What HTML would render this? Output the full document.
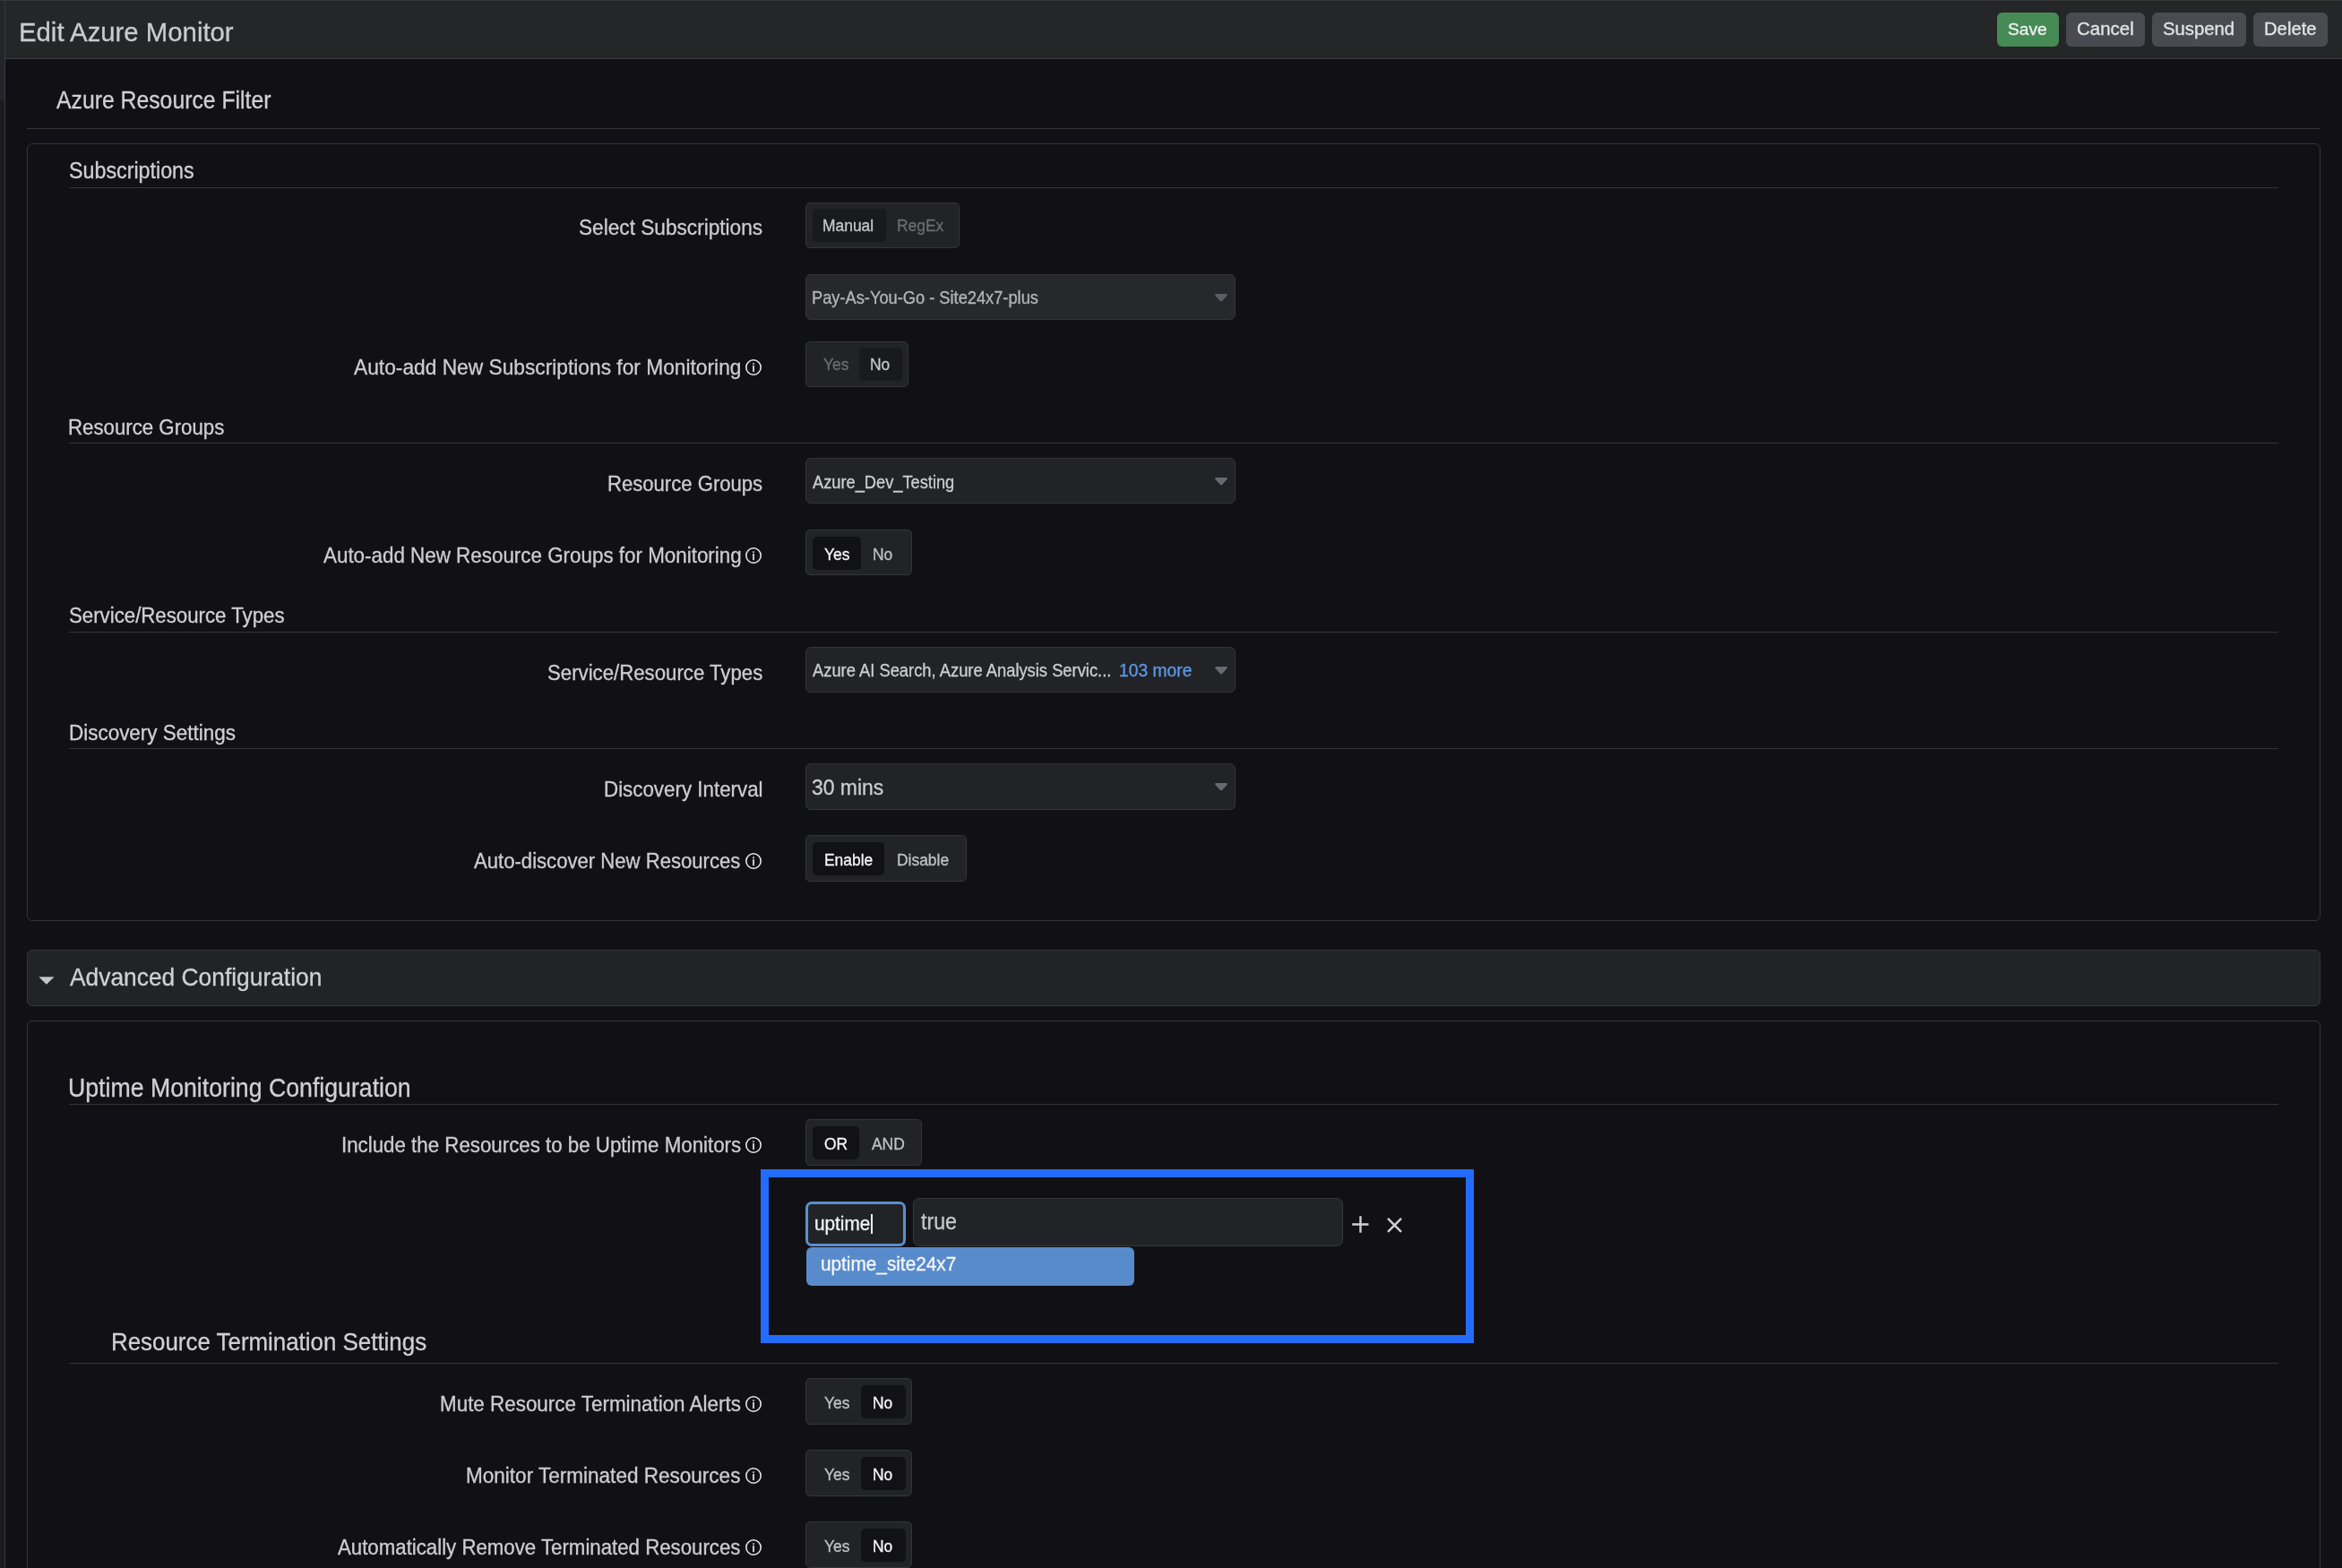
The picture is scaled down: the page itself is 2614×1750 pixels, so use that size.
<!DOCTYPE html>
<html><head><meta charset="utf-8"><title>Edit Azure Monitor</title>
<style>
html,body{margin:0;padding:0;}
body{width:2614px;height:1750px;background:#111115;position:relative;overflow:hidden;font-family:"Liberation Sans", sans-serif;}
.t{position:absolute;white-space:nowrap;line-height:1;will-change:transform;-webkit-text-stroke:0.3px currentColor;}
</style></head><body>
<div style="position:absolute;left:0px;top:0px;width:5.00px;height:111.00px;box-sizing:border-box;background:#23252a;"></div>
<div style="position:absolute;left:0px;top:111px;width:5.00px;height:1639.00px;box-sizing:border-box;background:#1a1c20;"></div>
<div style="position:absolute;left:5px;top:0px;width:1.00px;height:1750.00px;box-sizing:border-box;background:#363738;"></div>
<div style="position:absolute;left:6px;top:0px;width:2608.00px;height:66.00px;box-sizing:border-box;background:#252628;border-bottom:1px solid #3a3b3e;"></div>
<div style="position:absolute;left:0px;top:0px;width:2614.00px;height:1.00px;box-sizing:border-box;background:#373737;"></div>
<div class="t" style="left:21.35px;top:21.00px;font-size:29.33px;color:#cbcbcd;transform-origin:0 24.93px;transform:scaleY(1.03);">Edit Azure Monitor</div>
<div style="position:absolute;left:2229px;top:14px;width:69px;height:38px;background:#468a55;border-radius:6px;"></div>
<div class="t" style="left:2241.44px;top:23.00px;font-size:19.22px;color:#f2f2f2;transform-origin:0 16.34px;transform:scaleY(1.0);">Save</div>
<div style="position:absolute;left:2306px;top:14px;width:88px;height:38px;background:#4a4b50;border-radius:6px;"></div>
<div class="t" style="left:2317.78px;top:22.00px;font-size:20.50px;color:#e4e4e6;transform-origin:0 17.43px;transform:scaleY(1.0);">Cancel</div>
<div style="position:absolute;left:2402px;top:14px;width:105px;height:38px;background:#4a4b50;border-radius:6px;"></div>
<div class="t" style="left:2414.28px;top:22.00px;font-size:20.31px;color:#e4e4e6;transform-origin:0 17.26px;transform:scaleY(1.0);">Suspend</div>
<div style="position:absolute;left:2515px;top:14px;width:83px;height:38px;background:#4a4b50;border-radius:6px;"></div>
<div class="t" style="left:2526.78px;top:22.00px;font-size:20.25px;color:#e4e4e6;transform-origin:0 17.21px;transform:scaleY(1.0);">Delete</div>
<div class="t" style="left:63.20px;top:101.00px;font-size:24.78px;color:#d0d0d2;transform-origin:0 21.06px;transform:scaleY(1.08);">Azure Resource Filter</div>
<div style="position:absolute;left:30px;top:143px;width:2560.00px;height:1.00px;box-sizing:border-box;background:#353536;"></div>
<div style="position:absolute;left:30px;top:160px;width:2560.00px;height:868.00px;box-sizing:border-box;border:1px solid #353536;border-radius:6px;"></div>
<div class="t" style="left:76.54px;top:180.00px;font-size:23.28px;color:#d0d0d2;transform-origin:0 19.79px;transform:scaleY(1.08);">Subscriptions</div>
<div style="position:absolute;left:77px;top:209px;width:2466.00px;height:1.00px;box-sizing:border-box;background:#353536;"></div>
<div class="t" style="left:646.27px;top:243.00px;font-size:22.65px;color:#cdcdd0;transform-origin:0 19.25px;transform:scaleY(1.08);">Select Subscriptions</div>
<div style="position:absolute;left:899px;top:226px;width:172.00px;height:51.00px;box-sizing:border-box;background:#222327;border:1px solid #353536;border-radius:5px;"></div>
<div style="position:absolute;left:907px;top:233px;width:82.00px;height:37.00px;box-sizing:border-box;background:#191a1e;border-radius:5px;"></div>
<div class="t" style="left:918.41px;top:244.00px;font-size:17.43px;color:#c6c6c9;transform-origin:0 14.82px;transform:scaleY(1.08);">Manual</div>
<div class="t" style="left:1001.31px;top:244.00px;font-size:17.43px;color:#6c6c70;transform-origin:0 14.82px;transform:scaleY(1.08);">RegEx</div>
<div style="position:absolute;left:899px;top:306px;width:480.00px;height:51.00px;box-sizing:border-box;background:#27282c;border:1px solid #353536;border-radius:6px;"></div>
<svg style="position:absolute;left:1355.5px;top:327.70px" width="14" height="9" viewBox="0 0 14 9"><path d="M0.3 0.6 Q0.3 0 1 0 L13 0 Q13.7 0 13.7 0.6 L13.7 1.8 L8 7.9 Q7 8.8 6 7.9 L0.3 1.8 Z" fill="#5c5e64"/></svg>
<div class="t" style="left:905.94px;top:324.00px;font-size:18.26px;color:#b4b4b8;transform-origin:0 15.52px;transform:scaleY(1.08);">Pay-As-You-Go - Site24x7-plus</div>
<div class="t" style="left:394.80px;top:399.00px;font-size:22.75px;color:#cdcdd0;transform-origin:0 19.34px;transform:scaleY(1.08);">Auto-add New Subscriptions for Monitoring</div>
<svg style="position:absolute;left:831.00px;top:400.10px" width="20" height="20" viewBox="0 0 20 20"><circle cx="10" cy="10" r="8.2" fill="none" stroke="#e6e6e8" stroke-width="1.6"/><rect x="9.15" y="5.3" width="1.7" height="1.6" fill="#e6e6e8"/><rect x="9.15" y="7.9" width="1.7" height="7.2" fill="#e6e6e8"/></svg>
<div style="position:absolute;left:899px;top:381px;width:115.00px;height:51.00px;box-sizing:border-box;background:#222327;border:1px solid #353536;border-radius:5px;"></div>
<div style="position:absolute;left:959px;top:388px;width:48.00px;height:37.00px;box-sizing:border-box;background:#191a1e;border-radius:5px;"></div>
<div class="t" style="left:919.45px;top:399.00px;font-size:17.43px;color:#6c6c70;transform-origin:0 14.82px;transform:scaleY(1.08);">Yes</div>
<div class="t" style="left:971.41px;top:399.00px;font-size:17.43px;color:#c6c6c9;transform-origin:0 14.82px;transform:scaleY(1.08);">No</div>
<div class="t" style="left:76.42px;top:467.00px;font-size:22.24px;color:#d0d0d2;transform-origin:0 18.90px;transform:scaleY(1.08);">Resource Groups</div>
<div style="position:absolute;left:77px;top:494px;width:2466.00px;height:1.00px;box-sizing:border-box;background:#353536;"></div>
<div class="t" style="left:678.13px;top:530.00px;font-size:22.10px;color:#cdcdd0;transform-origin:0 18.79px;transform:scaleY(1.08);">Resource Groups</div>
<div style="position:absolute;left:899px;top:511px;width:480.00px;height:51.00px;box-sizing:border-box;background:#222327;border:1px solid #353536;border-radius:6px;"></div>
<svg style="position:absolute;left:1355.5px;top:532.70px" width="14" height="9" viewBox="0 0 14 9"><path d="M0.3 0.6 Q0.3 0 1 0 L13 0 Q13.7 0 13.7 0.6 L13.7 1.8 L8 7.9 Q7 8.8 6 7.9 L0.3 1.8 Z" fill="#686a72"/></svg>
<div class="t" style="left:907.20px;top:530.00px;font-size:18.25px;color:#cdcdd0;transform-origin:0 15.51px;transform:scaleY(1.08);">Azure_Dev_Testing</div>
<div class="t" style="left:360.50px;top:610.00px;font-size:22.40px;color:#cdcdd0;transform-origin:0 19.04px;transform:scaleY(1.08);">Auto-add New Resource Groups for Monitoring</div>
<svg style="position:absolute;left:831.00px;top:610.00px" width="20" height="20" viewBox="0 0 20 20"><circle cx="10" cy="10" r="8.2" fill="none" stroke="#e6e6e8" stroke-width="1.6"/><rect x="9.15" y="5.3" width="1.7" height="1.6" fill="#e6e6e8"/><rect x="9.15" y="7.9" width="1.7" height="7.2" fill="#e6e6e8"/></svg>
<div style="position:absolute;left:899px;top:591px;width:119.00px;height:51.00px;box-sizing:border-box;background:#222327;border:1px solid #353536;border-radius:5px;"></div>
<div style="position:absolute;left:907px;top:599px;width:54.00px;height:37.00px;box-sizing:border-box;background:#111116;border-radius:5px;"></div>
<div class="t" style="left:920.25px;top:611.00px;font-size:17.43px;color:#f4f4f4;transform-origin:0 14.82px;transform:scaleY(1.08);">Yes</div>
<div class="t" style="left:974.01px;top:611.00px;font-size:17.43px;color:#c0c0c3;transform-origin:0 14.82px;transform:scaleY(1.08);">No</div>
<div class="t" style="left:76.79px;top:677.00px;font-size:22.24px;color:#d0d0d2;transform-origin:0 18.90px;transform:scaleY(1.08);">Service/Resource Types</div>
<div style="position:absolute;left:77px;top:705px;width:2466.00px;height:1.00px;box-sizing:border-box;background:#353536;"></div>
<div class="t" style="left:610.89px;top:741.00px;font-size:22.21px;color:#cdcdd0;transform-origin:0 18.88px;transform:scaleY(1.08);">Service/Resource Types</div>
<div style="position:absolute;left:899px;top:722px;width:480.00px;height:51.00px;box-sizing:border-box;background:#222327;border:1px solid #353536;border-radius:6px;"></div>
<svg style="position:absolute;left:1355.5px;top:743.70px" width="14" height="9" viewBox="0 0 14 9"><path d="M0.3 0.6 Q0.3 0 1 0 L13 0 Q13.7 0 13.7 0.6 L13.7 1.8 L8 7.9 Q7 8.8 6 7.9 L0.3 1.8 Z" fill="#686a72"/></svg>
<div class="t" style="left:907.00px;top:740.00px;font-size:18.35px;color:#cdcdd0;transform-origin:0 15.60px;transform:scaleY(1.08);">Azure AI Search, Azure Analysis Servic...</div>
<div class="t" style="left:1248.95px;top:739.00px;font-size:19.29px;color:#5a99e4;transform-origin:0 16.40px;transform:scaleY(1.08);">103 more</div>
<div class="t" style="left:76.80px;top:808.00px;font-size:22.46px;color:#d0d0d2;transform-origin:0 19.09px;transform:scaleY(1.08);">Discovery Settings</div>
<div style="position:absolute;left:77px;top:835px;width:2466.00px;height:1.00px;box-sizing:border-box;background:#353536;"></div>
<div class="t" style="left:674.11px;top:871.00px;font-size:22.35px;color:#cdcdd0;transform-origin:0 19.00px;transform:scaleY(1.08);">Discovery Interval</div>
<div style="position:absolute;left:899px;top:852px;width:480.00px;height:52.00px;box-sizing:border-box;background:#222327;border:1px solid #353536;border-radius:6px;"></div>
<svg style="position:absolute;left:1355.5px;top:874.20px" width="14" height="9" viewBox="0 0 14 9"><path d="M0.3 0.6 Q0.3 0 1 0 L13 0 Q13.7 0 13.7 0.6 L13.7 1.8 L8 7.9 Q7 8.8 6 7.9 L0.3 1.8 Z" fill="#686a72"/></svg>
<div class="t" style="left:906.48px;top:868.00px;font-size:22.92px;color:#cdcdd0;transform-origin:0 19.48px;transform:scaleY(1.08);">30 mins</div>
<div class="t" style="left:529.30px;top:951.00px;font-size:22.11px;color:#cdcdd0;transform-origin:0 18.79px;transform:scaleY(1.08);">Auto-discover New Resources</div>
<svg style="position:absolute;left:831.00px;top:950.60px" width="20" height="20" viewBox="0 0 20 20"><circle cx="10" cy="10" r="8.2" fill="none" stroke="#e6e6e8" stroke-width="1.6"/><rect x="9.15" y="5.3" width="1.7" height="1.6" fill="#e6e6e8"/><rect x="9.15" y="7.9" width="1.7" height="7.2" fill="#e6e6e8"/></svg>
<div style="position:absolute;left:899px;top:932px;width:180.00px;height:52.00px;box-sizing:border-box;background:#222327;border:1px solid #353536;border-radius:5px;"></div>
<div style="position:absolute;left:907px;top:940px;width:80.00px;height:37.00px;box-sizing:border-box;background:#111116;border-radius:5px;"></div>
<div class="t" style="left:919.81px;top:952.00px;font-size:17.43px;color:#f4f4f4;transform-origin:0 14.82px;transform:scaleY(1.08);">Enable</div>
<div class="t" style="left:1000.51px;top:952.00px;font-size:17.43px;color:#c0c0c3;transform-origin:0 14.82px;transform:scaleY(1.08);">Disable</div>
<div style="position:absolute;left:30px;top:1060px;width:2560.00px;height:63.00px;box-sizing:border-box;background:#222327;border:1px solid #353536;border-radius:6px;"></div>
<svg style="position:absolute;left:43px;top:1089.8px" width="18" height="10" viewBox="0 0 18 10"><path d="M0.3 0.3 L17.5 0.3 L8.9 8.8 Z" fill="#c6c6c8"/></svg>
<div class="t" style="left:77.90px;top:1078.00px;font-size:26.36px;color:#d0d0d2;transform-origin:0 22.41px;transform:scaleY(1.08);">Advanced Configuration</div>
<div style="position:absolute;left:30px;top:1139px;width:2560.00px;height:631.00px;box-sizing:border-box;border:1px solid #353536;border-radius:6px;"></div>
<div class="t" style="left:75.76px;top:1202.00px;font-size:26.69px;color:#d0d0d2;transform-origin:0 22.69px;transform:scaleY(1.08);">Uptime Monitoring Configuration</div>
<div style="position:absolute;left:77px;top:1232px;width:2466.00px;height:1.00px;box-sizing:border-box;background:#353536;"></div>
<div class="t" style="left:380.59px;top:1268.00px;font-size:22.30px;color:#cdcdd0;transform-origin:0 18.96px;transform:scaleY(1.08);">Include the Resources to be Uptime Monitors</div>
<svg style="position:absolute;left:831.00px;top:1267.70px" width="20" height="20" viewBox="0 0 20 20"><circle cx="10" cy="10" r="8.2" fill="none" stroke="#e6e6e8" stroke-width="1.6"/><rect x="9.15" y="5.3" width="1.7" height="1.6" fill="#e6e6e8"/><rect x="9.15" y="7.9" width="1.7" height="7.2" fill="#e6e6e8"/></svg>
<div style="position:absolute;left:899px;top:1249px;width:130.00px;height:52.00px;box-sizing:border-box;background:#222327;border:1px solid #353536;border-radius:5px;"></div>
<div style="position:absolute;left:907px;top:1257px;width:52.00px;height:37.00px;box-sizing:border-box;background:#111116;border-radius:5px;"></div>
<div class="t" style="left:919.83px;top:1269.00px;font-size:17.43px;color:#f4f4f4;transform-origin:0 14.82px;transform:scaleY(1.08);">OR</div>
<div class="t" style="left:972.80px;top:1269.00px;font-size:17.43px;color:#c0c0c3;transform-origin:0 14.82px;transform:scaleY(1.08);">AND</div>
<div style="position:absolute;left:849px;top:1305px;width:796.00px;height:194.00px;box-sizing:border-box;border:9px solid #236cfb;"></div>
<div style="position:absolute;left:899px;top:1341px;width:112.00px;height:50.00px;box-sizing:border-box;background:#222327;border:3px solid #5a8fd0;border-radius:7px;"></div>
<div class="t" style="left:908.55px;top:1356.00px;font-size:20.77px;color:#f4f4f4;transform-origin:0 17.65px;transform:scaleY(1.08);">uptime</div>
<div style="position:absolute;left:972px;top:1355px;width:2.00px;height:22.00px;box-sizing:border-box;background:#f0f0f0;"></div>
<div style="position:absolute;left:1019px;top:1337px;width:480.00px;height:54.00px;box-sizing:border-box;background:#222327;border:1px solid #373738;border-radius:7px;"></div>
<div class="t" style="left:1027.97px;top:1353.00px;font-size:23.23px;color:#c6c6ca;transform-origin:0 19.75px;transform:scaleY(1.08);">true</div>
<svg style="position:absolute;left:1508px;top:1356px" width="21" height="21" viewBox="0 0 21 21"><path d="M10.5 1.2 V19.8 M1.2 10.5 H19.5" stroke="#cfcfd1" stroke-width="2.4"/></svg>
<svg style="position:absolute;left:1546.5px;top:1358px" width="19" height="19" viewBox="0 0 19 19"><path d="M2 1.8 L17 16.8 M17 1.8 L2 16.8" stroke="#cfcfd1" stroke-width="2.5"/></svg>
<div style="position:absolute;left:900px;top:1392px;width:366.00px;height:42.50px;box-sizing:border-box;background:#588bcc;border-radius:6px;"></div>
<div class="t" style="left:915.75px;top:1401.00px;font-size:20.77px;color:#f6f6f6;transform-origin:0 17.65px;transform:scaleY(1.08);">uptime_site24x7</div>
<div class="t" style="left:123.93px;top:1486.00px;font-size:25.90px;color:#d0d0d2;transform-origin:0 22.01px;transform:scaleY(1.08);">Resource Termination Settings</div>
<div style="position:absolute;left:77px;top:1521px;width:2466.00px;height:1.00px;box-sizing:border-box;background:#353536;"></div>
<div class="t" style="left:490.91px;top:1557.00px;font-size:22.41px;color:#cdcdd0;transform-origin:0 19.05px;transform:scaleY(1.08);">Mute Resource Termination Alerts</div>
<svg style="position:absolute;left:831.00px;top:1557.00px" width="20" height="20" viewBox="0 0 20 20"><circle cx="10" cy="10" r="8.2" fill="none" stroke="#e6e6e8" stroke-width="1.6"/><rect x="9.15" y="5.3" width="1.7" height="1.6" fill="#e6e6e8"/><rect x="9.15" y="7.9" width="1.7" height="7.2" fill="#e6e6e8"/></svg>
<div style="position:absolute;left:899px;top:1538px;width:119.00px;height:52.00px;box-sizing:border-box;background:#222327;border:1px solid #353536;border-radius:5px;"></div>
<div style="position:absolute;left:961px;top:1546px;width:50.00px;height:37.00px;box-sizing:border-box;background:#111116;border-radius:5px;"></div>
<div class="t" style="left:920.25px;top:1558.00px;font-size:17.43px;color:#c0c0c3;transform-origin:0 14.82px;transform:scaleY(1.08);">Yes</div>
<div class="t" style="left:974.31px;top:1558.00px;font-size:17.43px;color:#f4f4f4;transform-origin:0 14.82px;transform:scaleY(1.08);">No</div>
<div class="t" style="left:520.40px;top:1637.00px;font-size:22.54px;color:#cdcdd0;transform-origin:0 19.16px;transform:scaleY(1.08);">Monitor Terminated Resources</div>
<svg style="position:absolute;left:831.00px;top:1636.70px" width="20" height="20" viewBox="0 0 20 20"><circle cx="10" cy="10" r="8.2" fill="none" stroke="#e6e6e8" stroke-width="1.6"/><rect x="9.15" y="5.3" width="1.7" height="1.6" fill="#e6e6e8"/><rect x="9.15" y="7.9" width="1.7" height="7.2" fill="#e6e6e8"/></svg>
<div style="position:absolute;left:899px;top:1618px;width:119.00px;height:52.00px;box-sizing:border-box;background:#222327;border:1px solid #353536;border-radius:5px;"></div>
<div style="position:absolute;left:961px;top:1626px;width:50.00px;height:37.00px;box-sizing:border-box;background:#111116;border-radius:5px;"></div>
<div class="t" style="left:920.25px;top:1638.00px;font-size:17.43px;color:#c0c0c3;transform-origin:0 14.82px;transform:scaleY(1.08);">Yes</div>
<div class="t" style="left:974.31px;top:1638.00px;font-size:17.43px;color:#f4f4f4;transform-origin:0 14.82px;transform:scaleY(1.08);">No</div>
<div class="t" style="left:377.20px;top:1717.00px;font-size:22.24px;color:#cdcdd0;transform-origin:0 18.90px;transform:scaleY(1.08);">Automatically Remove Terminated Resources</div>
<svg style="position:absolute;left:831.00px;top:1716.70px" width="20" height="20" viewBox="0 0 20 20"><circle cx="10" cy="10" r="8.2" fill="none" stroke="#e6e6e8" stroke-width="1.6"/><rect x="9.15" y="5.3" width="1.7" height="1.6" fill="#e6e6e8"/><rect x="9.15" y="7.9" width="1.7" height="7.2" fill="#e6e6e8"/></svg>
<div style="position:absolute;left:899px;top:1698px;width:119.00px;height:52.00px;box-sizing:border-box;background:#222327;border:1px solid #353536;border-radius:5px;"></div>
<div style="position:absolute;left:961px;top:1706px;width:50.00px;height:37.00px;box-sizing:border-box;background:#111116;border-radius:5px;"></div>
<div class="t" style="left:920.25px;top:1718.00px;font-size:17.43px;color:#c0c0c3;transform-origin:0 14.82px;transform:scaleY(1.08);">Yes</div>
<div class="t" style="left:974.31px;top:1718.00px;font-size:17.43px;color:#f4f4f4;transform-origin:0 14.82px;transform:scaleY(1.08);">No</div>
</body></html>
